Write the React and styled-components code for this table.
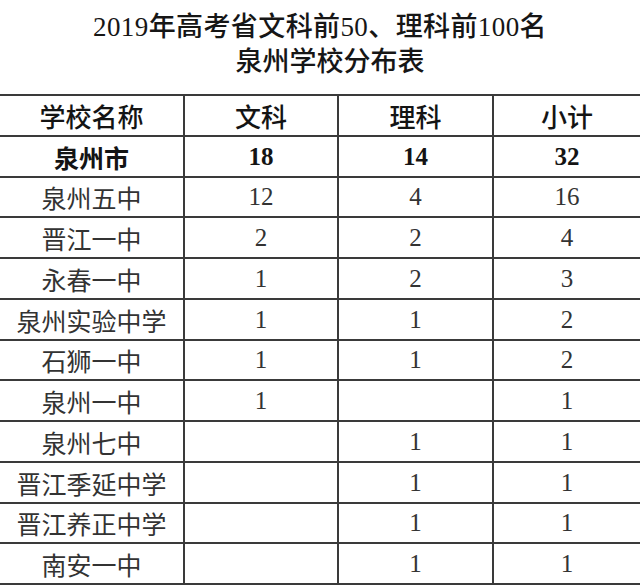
import React from "react";
import styled, { createGlobalStyle } from "styled-components";

const GlobalStyle = createGlobalStyle`
    html, body {
        margin: 0;
        padding: 0;
        background: #ffffff;
    }
    body {
        font-family: "Liberation Serif", "Noto Sans CJK SC", serif;
        overflow: hidden;
    }
`;

const rows = [
    { name: "泉州市", wen: "18", li: "14", total: "32", strong: true },
    { name: "泉州五中", wen: "12", li: "4", total: "16" },
    { name: "晋江一中", wen: "2", li: "2", total: "4" },
    { name: "永春一中", wen: "1", li: "2", total: "3" },
    { name: "泉州实验中学", wen: "1", li: "1", total: "2" },
    { name: "石狮一中", wen: "1", li: "1", total: "2" },
    { name: "泉州一中", wen: "1", li: "", total: "1" },
    { name: "泉州七中", wen: "", li: "1", total: "1" },
    { name: "晋江季延中学", wen: "", li: "1", total: "1" },
    { name: "晋江养正中学", wen: "", li: "1", total: "1" },
    { name: "南安一中", wen: "", li: "1", total: "1" },
];

export default function App() {
    return (
        <Page>
            <GlobalStyle />
            <Title>
                <TitleLine spacing={0.4}>2019年高考省文科前50、理科前100名</TitleLine>
                <TitleLine shift={20}>泉州学校分布表</TitleLine>
            </Title>
            <Grid>
                <Cell head first>学校名称</Cell>
                <Cell head>文科</Cell>
                <Cell head>理科</Cell>
                <Cell head>小计</Cell>
                {rows.map(r => (
                    <React.Fragment key={r.name}>
                        <Cell first strong={r.strong}>{r.name}</Cell>
                        <Cell strong={r.strong}>{r.wen}</Cell>
                        <Cell strong={r.strong}>{r.li}</Cell>
                        <Cell strong={r.strong}>{r.total}</Cell>
                    </React.Fragment>
                ))}
            </Grid>
        </Page>
    );
}

const Page = styled.div`
    width: 640px;
    height: 587px;
    background: #fff;
`;

const Title = styled.div`
    display: flex;
    flex-direction: column;
    align-items: center;
    padding-top: 10px;
    margin-bottom: 14px;
    color: #161616;
`;

const TitleLine = styled.div`
    font-size: 27px;
    line-height: 35px;
    font-weight: 500;
    white-space: nowrap;
    letter-spacing: ${p => p.spacing || 0}px;
    padding-left: ${p => p.shift || 0}px;
`;

const Grid = styled.div`
    display: grid;
    grid-template-columns: 183px 154px 155px 148px;
    grid-auto-rows: 40.75px;
    border-top: 2px solid #3a3a3a;
`;

const Cell = styled.div`
    display: flex;
    align-items: center;
    justify-content: center;
    box-sizing: border-box;
    border-bottom: 2px solid #3a3a3a;
    border-left: ${p => (p.first ? "none" : "2px solid #3a3a3a")};
    font-size: ${p => (p.head ? "26px" : "25px")};
    font-weight: ${p => (p.strong ? 700 : p.head ? 500 : 400)};
    color: ${p => (p.head || p.strong ? "#141414" : "#333333")};
    white-space: nowrap;
    padding-top: 1px;
`;
